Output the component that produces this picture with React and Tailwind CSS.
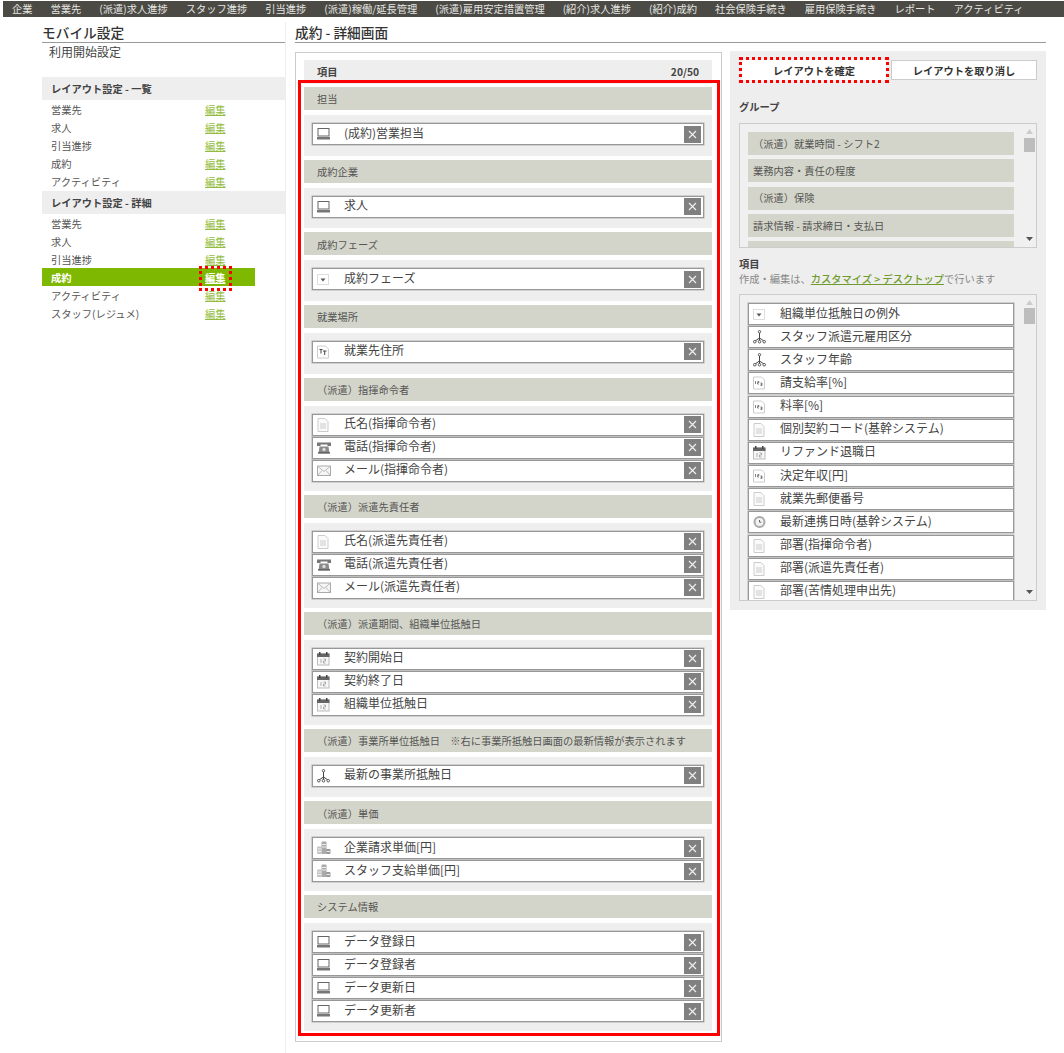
import React from 'react';

const navItems = ['企業', '営業先', '(派遣)求人進捗', 'スタッフ進捗', '引当進捗', '(派遣)稼働/延長管理', '(派遣)雇用安定措置管理', '(紹介)求人進捗', '(紹介)成約', '社会保険手続き', '雇用保険手続き', 'レポート', 'アクティビティ'];

const listLayouts = ['営業先', '求人', '引当進捗', '成約', 'アクティビティ'];
const detailLayouts = ['営業先', '求人', '引当進捗', '成約', 'アクティビティ', 'スタッフ(レジュメ)'];

const groups = [
    { title: '担当', fields: [['laptop', '(成約)営業担当']] },
    { title: '成約企業', fields: [['laptop', '求人']] },
    { title: '成約フェーズ', fields: [['select', '成約フェーズ']] },
    { title: '就業場所', fields: [['address', '就業先住所']] },
    { title: '（派遣）指揮命令者', fields: [['doc', '氏名(指揮命令者)'], ['phone', '電話(指揮命令者)'], ['mail', 'メール(指揮命令者)']] },
    { title: '（派遣）派遣先責任者', fields: [['doc', '氏名(派遣先責任者)'], ['phone', '電話(派遣先責任者)'], ['mail', 'メール(派遣先責任者)']] },
    { title: '（派遣）派遣期間、組織単位抵触日', fields: [['calendar', '契約開始日'], ['calendar', '契約終了日'], ['calendar', '組織単位抵触日']] },
    { title: '（派遣）事業所単位抵触日　※右に事業所抵触日画面の最新情報が表示されます', fields: [['tree', '最新の事業所抵触日']] },
    { title: '（派遣）単価', fields: [['coins', '企業請求単価[円]'], ['coins', 'スタッフ支給単価[円]']] },
    { title: 'システム情報', fields: [['laptop', 'データ登録日'], ['laptop', 'データ登録者'], ['laptop', 'データ更新日'], ['laptop', 'データ更新者']] },
];

const groupChoices = ['（派遣）就業時間 - シフト2', '業務内容・責任の程度', '（派遣）保険', '請求情報 - 請求締日・支払日', ''];

const fieldChoices = [
    ['select', '組織単位抵触日の例外'],
    ['tree', 'スタッフ派遣元雇用区分'],
    ['tree', 'スタッフ年齢'],
    ['number', '請支給率[%]'],
    ['number', '料率[%]'],
    ['doc', '個別契約コード(基幹システム)'],
    ['calendar', 'リファンド退職日'],
    ['number', '決定年収[円]'],
    ['doc', '就業先郵便番号'],
    ['clock', '最新連携日時(基幹システム)'],
    ['doc', '部署(指揮命令者)'],
    ['doc', '部署(派遣先責任者)'],
    ['doc', '部署(苦情処理申出先)'],
];

const Icon = ({ type }) => {
    return (
        <svg width="14" height="14" viewBox="0 0 14 14" className="shrink-0">
            {type === 'laptop' && (
                <>
                    <rect x="1" y="1.500" width="11" height="7.500" fill="#fff" stroke="#666" />
                    <rect x="0" y="10" width="13" height="2.500" fill="#777" />
                </>
            )}
            {type === 'select' && (
                <>
                    <rect x="0.500" y="2.500" width="11" height="10" fill="#fff" stroke="#ddd" />
                    <path d="M3.500 6.500h5l-2.500 3z" fill="#555" />
                </>
            )}
            {type === 'address' && (
                <>
                    <path d="M0.500 1h8l3 3v9h-11z" fill="#fff" stroke="#ccc" />
                    <path d="M2.500 4.500h3M4 4.500v4M6 6h3.500M7.700 6v4" stroke="#444" fill="none" />
                </>
            )}
            {type === 'doc' && (
                <>
                    <path d="M1 .5h7l3 3v10H1z" fill="#fafafa" stroke="#ccc" />
                    <path d="M3 6h6M3 8h6M3 10h6" stroke="#ccc" fill="none" />
                </>
            )}
            {type === 'phone' && (
                <>
                    <path d="M0 1.500h14v3.500h-3.500V3.500h-7V5H0z" fill="#777" />
                    <path d="M2.500 5.500h9l1 7h-11z" fill="#8a8a8a" />
                    <rect x="1" y="11" width="12" height="1.500" fill="#666" />
                    <circle cx="7" cy="8.500" r="1.700" fill="#ddd" />
                </>
            )}
            {type === 'mail' && (
                <>
                    <rect x="0.500" y="2" width="13" height="9.500" fill="#f6f6f6" stroke="#aaa" />
                    <path d="M1 2.500l6 5 6-5M1 11l4-4.500M13 11L9 6.500" stroke="#bbb" fill="none" />
                </>
            )}
            {type === 'calendar' && (
                <>
                    <rect x="0.500" y="2" width="11.500" height="11" fill="#f7f7f7" stroke="#bbb" />
                    <rect x="0" y="1.500" width="12.500" height="3.500" fill="#666" />
                    <rect x="2" y="0" width="1.500" height="3" fill="#444" />
                    <rect x="9" y="0" width="1.500" height="3" fill="#444" />
                    <path d="M4 7v4M6.500 7h2v2h-2v2h2" stroke="#999" fill="none" strokeWidth="0.800" />
                </>
            )}
            {type === 'tree' && (
                <>
                    <circle cx="6.500" cy="1.700" r="1.200" fill="#fff" stroke="#555" />
                    <path d="M6.500 3v5M6.500 8L2 11M6.500 8L11 11M6.500 8v3" stroke="#444" fill="none" />
                    <circle cx="1.800" cy="11.700" r="1.300" fill="#fff" stroke="#555" />
                    <circle cx="6.500" cy="11.700" r="1.300" fill="#fff" stroke="#555" />
                    <circle cx="11.200" cy="11.700" r="1.300" fill="#fff" stroke="#555" />
                </>
            )}
            {type === 'coins' && (
                <>
                    <rect x="4.500" y="0.500" width="5" height="12.500" rx="1" fill="#aaa" />
                    <rect x="0" y="5.500" width="5" height="7.500" rx="1" fill="#c4c4c4" />
                    <rect x="9" y="8" width="4.500" height="5" rx="1" fill="#999" />
                    <path d="M0.500 8h4M0.500 10.500h4M5 3.500h4M5 6h4M9.500 10.500h3.500" stroke="#eee" fill="none" />
                </>
            )}
            {type === 'number' && (
                <>
                    <path d="M0.500 1h8l3 3v9h-11z" fill="#fff" stroke="#ccc" />
                    <path d="M2.500 5v3M4.500 5.500h1.500v1H4.500v1.500H6M7.500 7H9v1.200H7.800 9v1.300H7.500" stroke="#666" fill="none" strokeWidth="0.800" />
                </>
            )}
            {type === 'clock' && (
                <>
                    <circle cx="6.500" cy="7" r="6" fill="#aaa" />
                    <circle cx="6.500" cy="7" r="4" fill="#f2f2f2" />
                    <path d="M6.500 5v2.200h1.800" stroke="#666" fill="none" />
                </>
            )}
        </svg>
    );
};

const FieldRow = ({ type, label, removable }) => (
    <div className="flex h-[22px] shrink-0 items-center border border-[#989898] bg-white pl-1 pr-[2px] shadow-[0_0_0_0.5px_#b0b0b0]">
        <Icon type={type} />
        <span className="ml-[13px] flex-1 pb-[3px] text-xs whitespace-nowrap text-[#444]">{label}</span>
        {removable && (
            <span className="flex h-[17px] w-[17px] items-center justify-center bg-[#808080]">
                <svg width="9" height="9" viewBox="0 0 9 9">
                    <path d="M1 1l7 7M8 1l-7 7" stroke="#eee" strokeWidth="1.200" fill="none" />
                </svg>
            </span>
        )}
    </div>
);

const Scrollbar = ({ thumbClass }) => (
    <div className="relative w-[22px] shrink-0">
        <svg width="7" height="5" viewBox="0 0 7 5" className="absolute top-[5px] left-[12px]">
            <path d="M3.500 0l3.500 5H0z" fill="#ccc" />
        </svg>
        <div className={`absolute left-[10px] w-[11px] bg-[#bdbdbd] ${thumbClass}`} />
        <svg width="7" height="4" viewBox="0 0 7 4" className="absolute bottom-[6px] left-[12px]">
            <path d="M0 0h7L3.500 4z" fill="#555" />
        </svg>
    </div>
);

const SideRows = ({ rows, active }) => (
    <ul>
        {rows.map((row) => (
            <li
                key={row}
                className={`relative flex h-[18px] w-[213px] items-center pt-[1px] pl-[9px] text-[10.25px] ${row === active ? 'bg-[#7fb800] font-bold text-white' : 'text-[#555]'}`}
            >
                <span className="w-[154px]">{row}</span>
                <a className={`underline ${row === active ? 'text-white' : 'text-[#93bd3e]'}`}>編集</a>
                {row === active && (
                    <span className="absolute top-[1px] left-[160px] h-[19px] w-[27px] outline-3 outline-dotted outline-[#f00]" />
                )}
            </li>
        ))}
    </ul>
);

export default function App() {
    return (
        <div className="min-h-[1053px] bg-white pt-[1px] [font-family:'Noto_Sans_CJK_JP','Liberation_Sans',sans-serif]">
            {/* Top menu */}
            <nav className="ml-[3px] flex h-4 items-center bg-[#4b4a44] text-[10.25px] whitespace-nowrap text-[#e6e6e2]">
                {navItems.map((item) => (
                    <span key={item} className="px-[9px]">{item}</span>
                ))}
            </nav>

            <div className="flex pl-[42px]">
                {/* Sidebar */}
                <aside className="mt-[5px] min-h-[1031px] w-[244px] border-r border-[#eeeeee]">
                    <h2 className="h-[21px] w-[243px] border-b border-[#999] pt-[3px] text-[13.7px] leading-[14px] font-medium text-[#333]">モバイル設定</h2>
                    <p className="pl-[7px] pt-[1px] text-xs leading-[16px] text-[#444]">利用開始設定</p>
                    <h3 className="mt-[17px] flex h-[23px] w-[243px] items-center bg-[#eeeeee] pl-[9px] text-[10.25px] font-bold text-[#444]">レイアウト設定 - 一覧</h3>
                    <SideRows rows={listLayouts} />
                    <h3 className="mt-[1px] flex h-[23px] w-[243px] items-center bg-[#eeeeee] pl-[9px] text-[10.25px] font-bold text-[#444]">レイアウト設定 - 詳細</h3>
                    <SideRows rows={detailLayouts} active="成約" />
                </aside>

                <main className="mt-[5px] ml-[9px] w-[751px]">
                    <h1 className="h-[21px] border-b border-[#999] pt-[3px] text-[13.7px] leading-[14px] font-medium text-[#333]">成約 - 詳細画面</h1>

                    <div className="mt-[9px] flex items-start">
                        {/* Layout being edited */}
                        <section className="relative w-[427px] border border-[#cccccc] pt-[7px] pr-[9px] pb-[10px] pl-2">
                            <div className="flex h-6 items-center justify-between bg-[#eeeeee] px-[13px] text-[10.25px] font-bold text-[#444]">
                                <span>項目</span>
                                <span>20/50</span>
                            </div>
                            <div className="mt-[3px] flex flex-col gap-[4px]">
                                {groups.map((group) => (
                                    <div key={group.title} className="flex flex-col gap-[5px]">
                                        <div className="flex h-[23px] items-center bg-[#d4d5ca] pt-[1px] pl-[13px] text-[10.25px] whitespace-nowrap text-[#555]">{group.title}</div>
                                        <div className="flex min-h-[40.67px] flex-col gap-[1.17px] bg-[#eeeeee] px-2 pt-2 pb-[8.67px]">
                                            {group.fields.map(([type, label]) => (
                                                <FieldRow key={label} type={type} label={label} removable />
                                            ))}
                                        </div>
                                    </div>
                                ))}
                            </div>
                            <div className="pointer-events-none absolute top-[27px] right-[1px] bottom-[5px] left-[2px] border-[3px] border-[#f00]" />
                        </section>

                        {/* Palette */}
                        <section className="-mt-[1px] ml-2 h-[559px] w-[316px] bg-[#eeeeee] px-[9px] pt-[9px]">
                            <div className="flex pl-[3px]">
                                <button className="h-5 w-[144px] bg-white pt-[1px] text-[10.25px] font-bold text-[#333] outline-3 outline-dotted outline-[#f00]">レイアウトを確定</button>
                                <button className="ml-[5px] h-5 w-[146px] border border-[#cccccc] bg-white pt-[1px] text-[10.25px] font-bold text-[#333]">レイアウトを取り消し</button>
                            </div>

                            <h4 className="mt-5 text-[10.25px] leading-[14px] font-bold text-[#444]">グループ</h4>
                            <div className="mt-[9px] flex h-[125px] overflow-hidden border border-[#cccccc] bg-[#f0f0f0]">
                                <div className="flex flex-1 flex-col gap-[4.33px] pt-2 pl-2">
                                    {groupChoices.map((choice, i) => (
                                        <div key={i} className="flex h-[23px] shrink-0 items-center bg-[#d4d5ca] pl-[5px] text-[10.25px] whitespace-nowrap text-[#555]">{choice}</div>
                                    ))}
                                </div>
                                <Scrollbar thumbClass="top-[14px] h-[14px]" />
                            </div>

                            <h4 className="mt-[9px] text-[10.25px] leading-[14px] font-bold text-[#444]">項目</h4>
                            <p className="text-[10.25px] leading-[16px] text-[#888]">
                                作成・編集は、<a className="font-medium text-[#6f9a2c] underline">カスタマイズ &gt; デスクトップ</a>で行います
                            </p>
                            <div className="mt-[7px] flex h-[307px] overflow-hidden border border-[#cccccc] bg-[#f0f0f0]">
                                <div className="flex flex-1 flex-col gap-[1.17px] pt-2 pl-2">
                                    {fieldChoices.map(([type, label]) => (
                                        <FieldRow key={label} type={type} label={label} />
                                    ))}
                                </div>
                                <Scrollbar thumbClass="top-[13px] h-[16px]" />
                            </div>
                        </section>
                    </div>
                </main>
            </div>
        </div>
    );
}
